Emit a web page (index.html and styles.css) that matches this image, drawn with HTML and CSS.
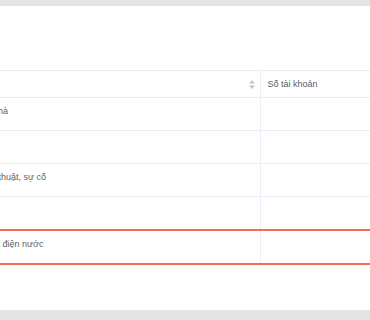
FILE: index.html
```html
<!DOCTYPE html>
<html>
<head>
  <title>Danh mục chi phí</title>
  <link rel="stylesheet" href="styles.css">
</head>
<body>
  <div class="panel">
    <div class="table-wrap">
      <table class="data-table">
        <thead>
          <tr>
            <th class="col-name">
              <div class="th-inner">
                <span>Tên</span>
                <svg class="sort" width="6" height="9" viewBox="0 0 6 9">
                  <path d="M3 0 L6 3.4 L0 3.4 Z" fill="#c0c4cc"/>
                  <path d="M3 9 L6 5.6 L0 5.6 Z" fill="#c0c4cc"/>
                </svg>
              </div>
            </th>
            <th class="col-account">Số tài khoản</th>
          </tr>
        </thead>
        <tbody>
          <tr><td>Chi phí thuê nhà</td><td></td></tr>
          <tr><td></td><td></td></tr>
          <tr><td>Sửa chữa, kỹ thuật, sự cố</td><td></td></tr>
          <tr><td></td><td></td></tr>
          <tr class="row-active"><td>Chi phí lắp đặt điện nước</td><td></td></tr>
        </tbody>
      </table>
    </div>
  </div>
</body>
</html>
```

FILE: styles.css
```css
body { margin: 0; background: #e4e4e4; font-family: "Liberation Sans", Arial, sans-serif; }
.panel { margin-top: 6px; height: 304px; background: #fff; padding-top: 64px; box-sizing: border-box; }
.table-wrap { overflow: hidden; }
.data-table { border-collapse: collapse; margin-left: -65px; width: 435px; table-layout: fixed; font-size: 9px; color: #606266; }
.data-table th, .data-table td { border-bottom: 1px solid #ebeef5; text-align: left; font-weight: normal; padding: 0 7px; white-space: nowrap; overflow: hidden; }
.data-table th { border-top: 1px solid #ebeef5; height: 26px; color: #5a5c61; }
.data-table th:first-child { padding-right: 5px; }
.data-table td { height: 33px; vertical-align: middle; padding-bottom: 6px; box-sizing: border-box; }
.col-name { width: 325px; box-sizing: border-box; }
.data-table th:first-child, .data-table td:first-child { border-right: 1px solid #ebeef5; }
.th-inner { display: flex; align-items: center; justify-content: space-between; }
.sort { display: block; }
.row-active td { height: 34px; border-top: 2px solid #f56a55; border-bottom: 2px solid #f56a55; }
```
